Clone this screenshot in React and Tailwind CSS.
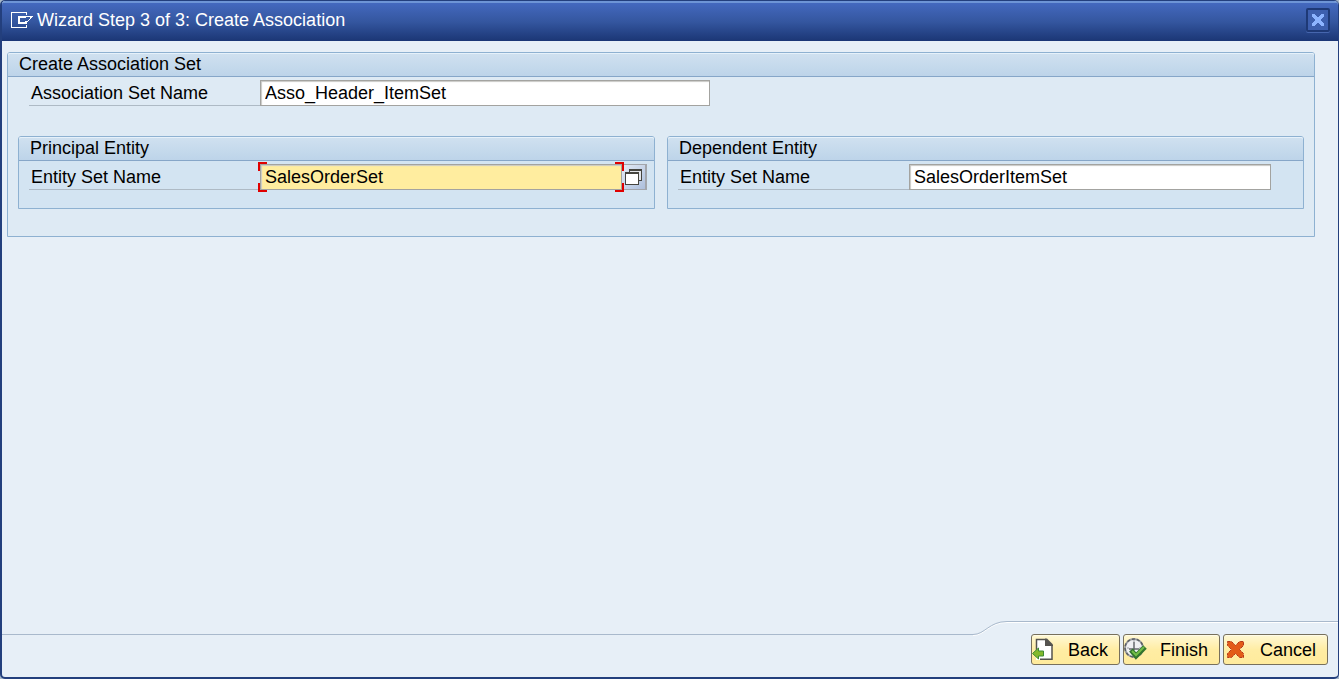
import { useState } from "react";

function TitleIcon() {
  return (
    <svg width="24" height="18" viewBox="0 0 24 18" fill="none" stroke="#ffffff" shapeRendering="crispEdges" aria-hidden="true">
      <path d="M16.5 4V1.5H1.5v15h15V14" />
      <path d="M16 6H9v6h7v-2" strokeWidth="2" />
      <path d="M15 5.5h8M20 6.5h2M15 10.5h3M18 9.5h1M19 8.5h1M20 7.5h1" />
    </svg>
  );
}

function CloseIcon() {
  return (
    <svg width="14" height="14" viewBox="0 0 14 14" fill="#8db4ff" shapeRendering="crispEdges" aria-hidden="true">
      <path d="M1 1h3v1h1v1h1v1h2V3h1V2h1V1h3v3h-1v1h-1v1h-1v2h1v1h1v1h1v3h-3v-1H9v-1H8v-1H6v1H5v1H4v1H1v-3h1V9h1V8h1V6H3V5H2V4H1z" />
    </svg>
  );
}

function MatchcodeIcon() {
  return (
    <svg width="17" height="17" viewBox="0 0 17 17" shapeRendering="crispEdges" aria-hidden="true">
      <rect x="4.5" y="0.5" width="12" height="11" fill="#e4e6ea" stroke="#45443e" />
      <path d="M4 0h13v2H4z" fill="#45443e" />
      <rect x="0.5" y="3.5" width="13" height="12" fill="#ffffff" stroke="#45443e" />
      <path d="M0 3h14v2H0z" fill="#45443e" />
    </svg>
  );
}

function BackIcon() {
  return (
    <svg width="24" height="24" viewBox="0 0 24 24" aria-hidden="true">
      <path d="M4 1h11l5 5v16H4z" fill="#ffffff" />
      <path d="M4.5 12V1.5h9M8 21.2h12V7" fill="none" stroke="#55534f" strokeWidth="1.5" />
      <path d="M13 0.5h2l6 6V8h-8z" fill="#55534f" />
      <path d="M0.5 15.500L6.500 10v3h5v5h-5v3z" fill="#83b92d" stroke="#3d8a35" />
    </svg>
  );
}

function FinishIcon() {
  return (
    <svg width="24" height="24" viewBox="0 0 24 24" fill="none" aria-hidden="true">
      <circle cx="10" cy="10" r="9" fill="#eff0f3" stroke="#9a9da2" strokeWidth="2" />
      <circle cx="10" cy="10" r="9" stroke="#5c5f64" strokeWidth="1.500" strokeDasharray="3 2" />
      <path d="M10 4v8M5 11h10" stroke="#65686e" strokeWidth="1.5" />
      <path d="M10 2v2M3 10h2M15 10h2" stroke="#9a9da2" />
      <path d="M7 12l5 6 9-9" stroke="#32752d" strokeWidth="5" />
      <path d="M8 13l4 4 8-8" stroke="#72bd46" strokeWidth="2" />
    </svg>
  );
}

function CancelIcon() {
  return (
    <svg width="24" height="24" viewBox="0 0 24 24" aria-hidden="true">
      <path
        d="M3.500 3.500h4l4 4 4-4h4v4l-4 4 4 4v4h-4l-4-4-4 4h-4v-4l4-4-4-4z"
        fill="#e35c18"
        stroke="#b5381b"
        strokeDasharray="3 1"
      />
    </svg>
  );
}

function Group({ title, className, children }) {
  return (
    <section className={`rounded-t-[3px] border border-[#8eb1d1] ${className}`}>
      <h2 className="h-6 rounded-t-[2px] border-b border-[#86a6c8] bg-linear-to-b from-[#d0e1f0] to-[#bdd4e9] pl-[11px] text-lg leading-[22px] shadow-[inset_0_1px_0_#e6f1fa]">
        {title}
      </h2>
      {children}
    </section>
  );
}

function Label({ htmlFor, children }) {
  return (
    <label htmlFor={htmlFor} className="h-[26px] w-[231px] shrink-0 border-b border-[#aebac5] pl-0.5 leading-[26px]">
      {children}
    </label>
  );
}

const inputClass =
  "block h-[26px] w-full border border-[#a3a3a0] pl-1 leading-6 outline-none shadow-[inset_1px_1px_1px_#c9c9c6]";

function FocusCorners() {
  return (
    <span className="pointer-events-none absolute -inset-x-0.5 -inset-y-0.5">
      <span className="absolute top-0 left-0 size-[9px] border-t-2 border-l-2 border-[#e00000]" />
      <span className="absolute top-0 right-0 size-[9px] border-t-2 border-r-2 border-[#e00000]" />
      <span className="absolute bottom-0 left-0 size-[9px] border-b-2 border-l-2 border-[#e00000]" />
      <span className="absolute right-0 bottom-0 size-[9px] border-r-2 border-b-2 border-[#e00000]" />
    </span>
  );
}

function WizardButton({ icon, children }) {
  return (
    <button
      type="button"
      className="flex h-[31px] items-center rounded-[3px] border border-[#77705c] bg-linear-to-b from-[#fff8d4] via-[#ffeda4] to-[#ffeb9c] pr-[11px] shadow-[inset_0_1px_0_#fffbe8]"
    >
      <span className="w-9 shrink-0">{icon}</span>
      {children}
    </button>
  );
}

export default function App() {
  const [setName, setSetName] = useState("Asso_Header_ItemSet");
  const [principal, setPrincipal] = useState("SalesOrderSet");
  const [dependent, setDependent] = useState("SalesOrderItemSet");

  return (
    <div className="min-h-screen bg-[#a5b7c9] font-['Liberation_Sans',Arial,sans-serif] text-lg text-black">
      <div className="flex min-h-screen flex-col overflow-hidden rounded-[5px] border-t border-r border-b-2 border-l-2 border-[#233f7d] bg-[#e7eff7]">
        <header className="flex h-10 items-center justify-between border-t-2 border-[#6e95d6] bg-linear-to-b from-[#4469bf] via-[#34569f] to-[#1b3675] px-2 pb-1">
          <div className="flex items-center gap-[3px]">
            <TitleIcon />
            <h1 className="leading-6 text-white">Wizard Step 3 of 3: Create Association</h1>
          </div>
          <button
            type="button"
            aria-label="Close"
            className="flex size-6 items-center justify-center rounded-[2px] border-2 border-[#1e3976] bg-[#3d5fae] shadow-[0_1px_0_#4666ae]"
          >
            <CloseIcon />
          </button>
        </header>

        <main className="flex-1 pt-[11px] pr-[23px] pb-4 pl-[5px]">
          <Group title="Create Association Set" className="bg-[#deeaf4] pb-[27px]">
            <div className="flex pt-[3px] pl-[21px]">
              <Label htmlFor="set-name">Association Set Name</Label>
              <div className="w-[450px]">
                <input
                  id="set-name"
                  className={`${inputClass} bg-white`}
                  value={setName}
                  onChange={(e) => setSetName(e.target.value)}
                />
              </div>
            </div>

            <div className="mt-[30px] grid grid-cols-2 gap-3 px-[10px]">
              <Group title="Principal Entity" className="bg-[#d3e4f2] pb-[18px]">
                <div className="flex pt-[3px] pr-[7px] pl-[10px]">
                  <Label htmlFor="principal">Entity Set Name</Label>
                  <div className="relative flex-1">
                    <input
                      id="principal"
                      className={`${inputClass} bg-[#ffed9f]`}
                      value={principal}
                      onChange={(e) => setPrincipal(e.target.value)}
                    />
                    <FocusCorners />
                  </div>
                  <button
                    type="button"
                    aria-label="Show values"
                    className="flex h-[26px] w-[25px] items-center justify-center border border-r-2 border-l-0 border-[#a3a6ac] bg-linear-to-br from-[#e4ebf5] to-[#adbfdc]"
                  >
                    <MatchcodeIcon />
                  </button>
                </div>
              </Group>

              <Group title="Dependent Entity" className="bg-[#d3e4f2] pb-[18px]">
                <div className="flex pt-[3px] pr-8 pl-[10px]">
                  <Label htmlFor="dependent">Entity Set Name</Label>
                  <div className="flex-1">
                    <input
                      id="dependent"
                      className={`${inputClass} bg-white`}
                      value={dependent}
                      onChange={(e) => setDependent(e.target.value)}
                    />
                  </div>
                </div>
              </Group>
            </div>
          </Group>
        </main>

        <footer className="flex h-14 items-start">
          <div className="mt-[13px] flex-1 border-t border-[#a9b9cc] shadow-[inset_0_1px_0_#ffffff]" />
          <svg width="34" height="16" viewBox="0 0 34 16" fill="none" aria-hidden="true">
            <path d="M0 14.5C12 14.5 16 1.5 34 1.5" stroke="#ffffff" />
            <path d="M0 13.5C12 13.5 16 0.5 34 0.5" stroke="#a9b9cc" />
          </svg>
          <div className="flex justify-end gap-[3px] border-t border-[#a9b9cc] pt-3 pr-[10px] pl-6 shadow-[inset_0_1px_0_#ffffff]">
            <WizardButton icon={<BackIcon />}>Back</WizardButton>
            <WizardButton icon={<FinishIcon />}>Finish</WizardButton>
            <WizardButton icon={<CancelIcon />}>Cancel</WizardButton>
          </div>
        </footer>
      </div>
    </div>
  );
}
